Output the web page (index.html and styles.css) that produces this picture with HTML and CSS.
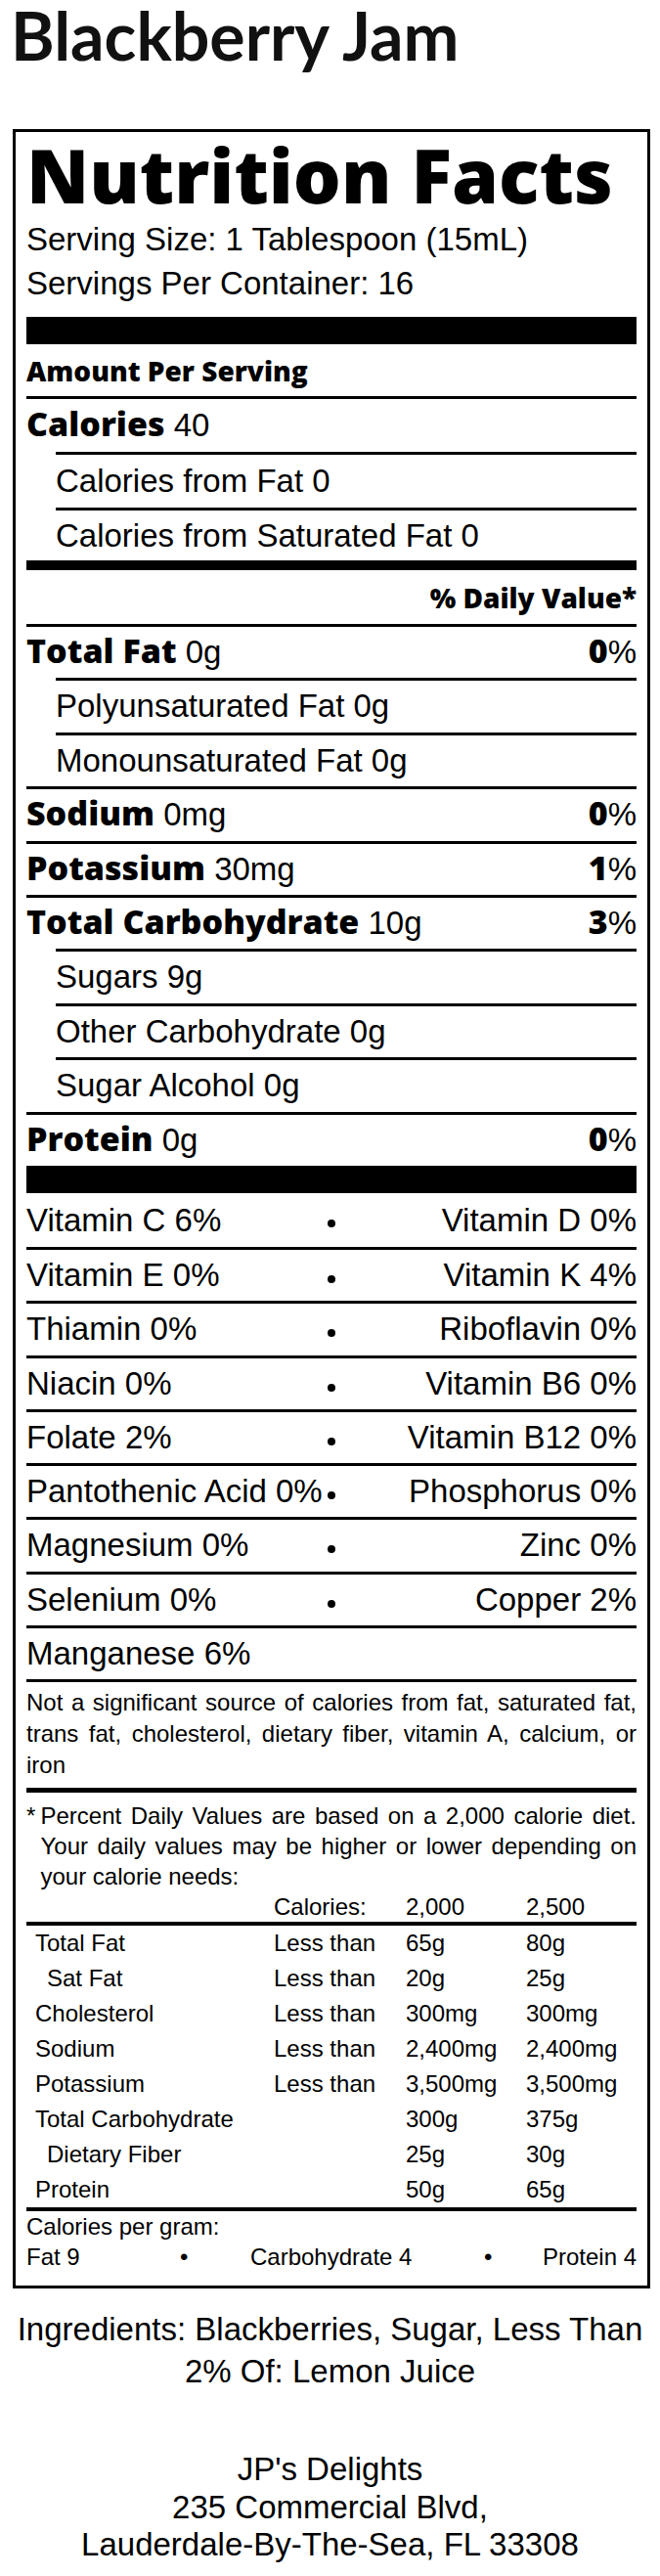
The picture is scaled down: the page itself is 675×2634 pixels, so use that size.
FILE: index.html
```
<!DOCTYPE html>
<html lang="en">
<head>
<meta charset="utf-8">
<title>Blackberry Jam</title>
<link rel="stylesheet" href="styles.css">
</head>
<body>
<div class="page">
  <h1 class="product">Blackberry Jam</h1>

  <section class="nf">
    <div class="nf-title">Nutrition Facts</div>
    <div class="serving">
      <div>Serving Size: 1 Tablespoon (15mL)</div>
      <div>Servings Per Container: 16</div>
    </div>
    <div class="bar bar-top"></div>

    <div class="amount">Amount Per Serving</div>
    <div class="row row-cal"><span><b class="b">Calories</b> 40</span></div>
    <div class="row row-cal indent"><span>Calories from Fat 0</span></div>
    <div class="row row-cal2 indent"><span>Calories from Saturated Fat 0</span></div>
    <div class="bar bar-mid"></div>
    <div class="dv-head"><span class="bs">% Daily Value*</span></div>

    <div class="row"><span><b class="b">Total Fat</b> 0g</span><span><b class="b">0</b>%</span></div>
    <div class="row indent"><span>Polyunsaturated Fat 0g</span></div>
    <div class="row indent"><span>Monounsaturated Fat 0g</span></div>
    <div class="row"><span><b class="b">Sodium</b> 0mg</span><span><b class="b">0</b>%</span></div>
    <div class="row"><span><b class="b">Potassium</b> 30mg</span><span><b class="b">1</b>%</span></div>
    <div class="row"><span><b class="b">Total Carbohydrate</b> 10g</span><span><b class="b">3</b>%</span></div>
    <div class="row indent"><span>Sugars 9g</span></div>
    <div class="row indent"><span>Other Carbohydrate 0g</span></div>
    <div class="row indent"><span>Sugar Alcohol 0g</span></div>
    <div class="row"><span><b class="b">Protein</b> 0g</span><span><b class="b">0</b>%</span></div>
    <div class="bar bar-vit"></div>

    <div class="vrow vrow-first"><span>Vitamin C 6%</span><span class="dot"></span><span class="vr">Vitamin D 0%</span></div>
    <div class="vrow"><span>Vitamin E 0%</span><span class="dot"></span><span class="vr">Vitamin K 4%</span></div>
    <div class="vrow"><span>Thiamin 0%</span><span class="dot"></span><span class="vr">Riboflavin 0%</span></div>
    <div class="vrow"><span>Niacin 0%</span><span class="dot"></span><span class="vr">Vitamin B6 0%</span></div>
    <div class="vrow"><span>Folate 2%</span><span class="dot"></span><span class="vr">Vitamin B12 0%</span></div>
    <div class="vrow"><span>Pantothenic Acid 0%</span><span class="dot"></span><span class="vr">Phosphorus 0%</span></div>
    <div class="vrow"><span>Magnesium 0%</span><span class="dot"></span><span class="vr">Zinc 0%</span></div>
    <div class="vrow"><span>Selenium 0%</span><span class="dot"></span><span class="vr">Copper 2%</span></div>
    <div class="vrow"><span>Manganese 6%</span></div>

    <p class="notsig">Not a significant source of calories from fat, saturated fat, trans fat, cholesterol, dietary fiber, vitamin A, calcium, or iron</p>

    <div class="foot">
      <p class="foot-note"><span class="star">*</span>Percent Daily Values are based on a 2,000 calorie diet. Your daily values may be higher or lower depending on your calorie needs:</p>
      <div class="dv-grid dv-grid-head">
        <span></span><span>Calories:</span><span>2,000</span><span>2,500</span>
      </div>
      <div class="dv-table">
        <div class="dv-grid"><span class="n1">Total Fat</span><span>Less than</span><span>65g</span><span>80g</span></div>
        <div class="dv-grid"><span class="n2">Sat Fat</span><span>Less than</span><span>20g</span><span>25g</span></div>
        <div class="dv-grid"><span class="n1">Cholesterol</span><span>Less than</span><span>300mg</span><span>300mg</span></div>
        <div class="dv-grid"><span class="n1">Sodium</span><span>Less than</span><span>2,400mg</span><span>2,400mg</span></div>
        <div class="dv-grid"><span class="n1">Potassium</span><span>Less than</span><span>3,500mg</span><span>3,500mg</span></div>
        <div class="dv-grid"><span class="n1">Total Carbohydrate</span><span></span><span>300g</span><span>375g</span></div>
        <div class="dv-grid"><span class="n2">Dietary Fiber</span><span></span><span>25g</span><span>30g</span></div>
        <div class="dv-grid"><span class="n1">Protein</span><span></span><span>50g</span><span>65g</span></div>
      </div>
      <div class="cpg">
        <div>Calories per gram:</div>
        <div class="cpg-row"><span>Fat 9</span><span>•</span><span>Carbohydrate 4</span><span>•</span><span class="cpg-last">Protein 4</span></div>
      </div>
    </div>
  </section>

  <p class="ingredients">Ingredients: Blackberries, Sugar, Less Than 2% Of: Lemon Juice</p>

  <address class="maker">
    <div>JP's Delights</div>
    <div>235 Commercial Blvd,</div>
    <div>Lauderdale-By-The-Sea, FL 33308</div>
  </address>
</div>
</body>
</html>
```
FILE: styles.css
```
* { box-sizing: border-box; }

body {
  margin: 0;
  background: #fff;
  color: #000;
  font-family: "Liberation Sans", Arial, sans-serif;
  font-size: 33px;
}

.page { width: 675px; }

.product {
  margin: 0 0 60px 11px;
  font: 700 68px/72px Lato, "Open Sans", sans-serif;
  color: #111;
}

.nf {
  margin-left: 13px;
  width: 652px;
  border: 3px solid #000;
  padding: 4px 11px 14px;
}

.nf-title {
  font: 800 77px/80px "Open Sans", sans-serif;
  white-space: nowrap;
}

.serving {
  margin-top: 3px;
  line-height: 45px;
  white-space: nowrap;
}

.bar { background: #000; }
.bar-top { height: 28px; margin-top: 12px; }
.bar-mid { height: 10px; }
.bar-vit { height: 28px; }

.b {
  font-family: "Open Sans", sans-serif;
  font-weight: 800;
  font-size: 34px;
  line-height: 1;
}

.bs {
  font: 800 28px/1 "Open Sans", sans-serif;
}

.amount {
  padding-top: 2px;
  font: 800 28px/51px "Open Sans", sans-serif;
}

.row {
  display: flex;
  justify-content: space-between;
  border-top: 3px solid #000;
  height: 55.4px;
  line-height: 52.4px;
  white-space: nowrap;
}

.row-cal { height: 57px; line-height: 54px; }
.row-cal2 { height: 54px; line-height: 51px; }
.indent { margin-left: 30px; }

.dv-head {
  height: 55px;
  line-height: 55px;
  text-align: right;
}

.vrow {
  display: grid;
  grid-template-columns: 1fr 10px 1fr;
  align-items: start;
  border-top: 3px solid #000;
  height: 55.3px;
  line-height: 52.3px;
  white-space: nowrap;
}

.vrow-first {
  border-top: 0;
  height: 55px;
  line-height: 55px;
}

.vr { text-align: right; }

.dot {
  width: 8px;
  height: 8px;
  margin-top: 26px;
  justify-self: center;
  border-radius: 50%;
  background: #000;
}

.vrow-first .dot { margin-top: 27px; }

.notsig {
  margin: 0;
  border-top: 3px solid #000;
  padding: 5px 0 7px;
  font-size: 24px;
  line-height: 32px;
  text-align: justify;
}

.foot {
  border-top: 5px solid #000;
  padding-top: 8px;
  font-size: 24px;
  line-height: 31px;
}

.foot-note {
  margin: 0;
  padding-left: 14.5px;
  text-indent: -14.5px;
  text-align: justify;
}

.star {
  display: inline-block;
  width: 14.5px;
  text-indent: 0;
}

.dv-grid {
  display: grid;
  grid-template-columns: 253px 135px 123px 1fr;
  white-space: nowrap;
}

.dv-table {
  border-top: 4px solid #000;
  border-bottom: 4px solid #000;
  line-height: 36px;
}

.n1 { padding-left: 9px; }
.n2 { padding-left: 21px; }

.cpg-row {
  display: grid;
  grid-template-columns: 157px 72px 239px auto 1fr;
  white-space: nowrap;
}

.cpg-last { justify-self: end; }

.ingredients {
  margin: 20px 0 0;
  padding: 0 13px;
  line-height: 43px;
  text-align: center;
}

.maker {
  margin-top: 60px;
  font-style: normal;
  line-height: 38.5px;
  text-align: center;
}
```
